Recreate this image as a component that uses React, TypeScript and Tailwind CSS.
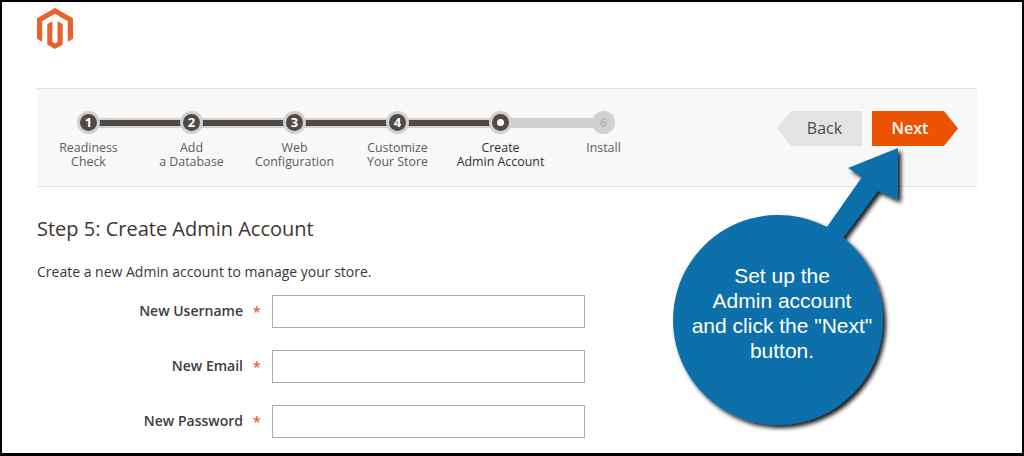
import React from 'react';

const steps = [
    { n: '1', lines: ['Readiness', 'Check'] },
    { n: '2', lines: ['Add', 'a Database'] },
    { n: '3', lines: ['Web', 'Configuration'] },
    { n: '4', lines: ['Customize', 'Your Store'] },
    { n: '5', lines: ['Create', 'Admin Account'], current: true },
    { n: '6', lines: ['Install'], todo: true },
];

const fields = ['New Username', 'New Email', 'New Password'];

function Logo() {
    return (
        <svg width="36" height="41" viewBox="1.6 0 20.8 24" preserveAspectRatio="none" className="block">
            <path fill="#e9622a" d="M12 24l-4.455-2.572v-12l2.97-1.715v12.001L12 20.713l1.485-.999V7.713l2.97 1.715v12L12 24zM22.391 6v12l-2.969 1.714V7.713L12 3.43 4.578 7.713v12.001L1.609 18V6L12 0l10.391 6z" />
        </svg>
    );
}

function Step({ n, lines, current, todo }: { n: string; lines: string[]; current?: boolean; todo?: boolean }) {
    return (
        <div className="relative z-10 flex w-[103px] flex-col items-center">
            <div className="flex h-[23px] w-[23px] items-center justify-center rounded-full bg-[#d1d1d1]">
                {current ? (
                    <div className="h-[17px] w-[17px] rounded-full border-[5px] border-[#514943] bg-white" />
                ) : todo ? (
                    <span className="text-[12px] font-bold leading-none text-[#b5b5b5]">{n}</span>
                ) : (
                    <div className="flex h-[17px] w-[17px] items-center justify-center rounded-full bg-[#514943] text-[13px] font-bold leading-none text-white">{n}</div>
                )}
            </div>
            <div className={`mt-[7px] text-center text-[12.4px] leading-[14px] ${current ? 'text-[#303030]' : 'text-[#5c5c5c]'}`}>
                {lines.map((l, i) => <React.Fragment key={l}>{i > 0 && <br />}{l}</React.Fragment>)}
            </div>
        </div>
    );
}

function Callout() {
    return (
        <svg width="240" height="300" viewBox="0 0 240 300" className="absolute left-[658px] top-[144px] z-20 overflow-visible">
            <defs>
                <filter id="callout-shadow" x="-20%" y="-20%" width="140%" height="140%">
                    <feDropShadow dx="3" dy="3" stdDeviation="2" floodColor="#000" floodOpacity="0.9" />
                </filter>
            </defs>
            <path
                filter="url(#callout-shadow)"
                fill="#0870ab"
                d="M238 2 L238 54 L218 45 L183.2 91.7 A105 105 0 1 1 166.9 81.1 L202 31 L188 22 Z"
            />
        </svg>
    );
}

export default function App() {
    return (
        <div className="relative h-[456px] w-[1024px] overflow-hidden border-2 border-b-[3px] border-black bg-white font-['Open_Sans',sans-serif]">
            <div className="pl-[35px] pr-[45px] pt-[6px]">
                <Logo />

                {/* stepper bar */}
                <div className="mt-[39px] flex h-[99px] items-start justify-between border-y border-[#e3e3e3] bg-[#f8f8f8] pr-[19px] pt-[22px]">
                    <div className="relative flex">
                        <div className="absolute left-[51px] top-[7px] h-[10px] w-[515px] bg-[#d1d1d1]" />
                        <div className="absolute left-[51px] top-[9px] h-[6px] w-[412px] bg-[#514943]" />
                        {steps.map((s) => <Step key={s.n} {...s} />)}
                    </div>
                    <div className="flex gap-[10px]">
                        <div className="flex h-[35px] w-[85px] items-center justify-center bg-[#e3e3e3] pb-[2px] pl-[10px] text-[16px] font-medium text-[#514943] [clip-path:polygon(14px_0,100%_0,100%_100%,14px_100%,0_50%)]">
                            Back
                        </div>
                        <div className="flex h-[35px] w-[86px] items-center justify-center bg-[#eb5202] pb-[2px] pr-[10px] text-[16px] font-semibold text-white [clip-path:polygon(0_0,calc(100%-14px)_0,100%_50%,calc(100%-14px)_100%,0_100%)]">
                            Next
                        </div>
                    </div>
                </div>

                <h1 className="mt-[28px] text-[20px] leading-[28px] text-[#41362f]">Step 5: Create Admin Account</h1>
                <p className="mt-[19px] text-[14px] leading-[20px] text-[#41362f]">Create a new Admin account to manage your store.</p>

                <div className="mt-[13px] flex flex-col gap-[22px]">
                    {fields.map((f) => (
                        <div key={f} className="flex items-center">
                            <label className="w-[206px] pb-[2px] text-right text-[14px] font-semibold leading-[20px] text-[#3d3d3d]">{f}</label>
                            <span className="ml-[10px] w-[19px] text-[14px] font-semibold text-[#e8622e]">*</span>
                            <div className="h-[33px] w-[313px] border border-[#adadad] bg-white" />
                        </div>
                    ))}
                </div>
            </div>

            <Callout />
            <div className="absolute left-[680px] top-[261px] z-30 w-[200px] text-center font-['Liberation_Sans',sans-serif] text-[21px] leading-[25px] text-white">
                Set up the<br />Admin account<br />and click the "Next"<br />button.
            </div>
        </div>
    );
}
